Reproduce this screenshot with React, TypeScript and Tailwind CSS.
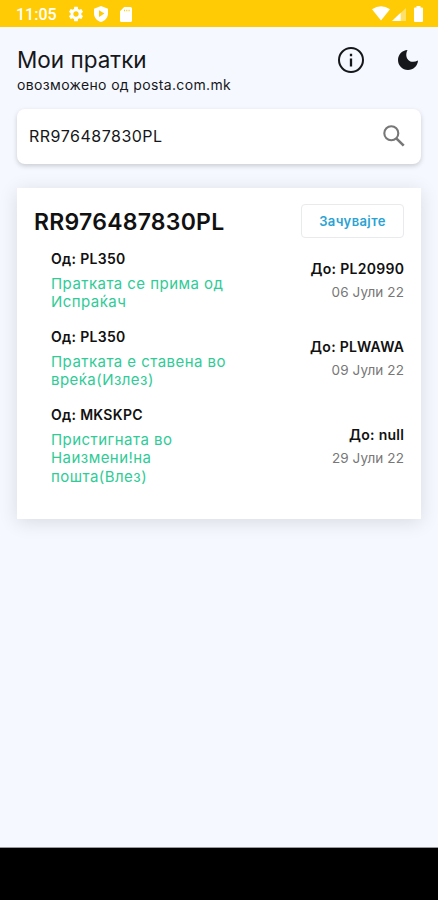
import { MdSettings } from "react-icons/md";

type Step = { from: string; to: string; date: string; lines: string[] };

const steps: Step[] = [
  { from: "PL350", to: "PL20990", date: "06 Јули 22", lines: ["Пратката се прима од", "Испраќач"] },
  { from: "PL350", to: "PLWAWA", date: "09 Јули 22", lines: ["Пратката е ставена во", "вреќа(Излез)"] },
  { from: "MKSKPC", to: "null", date: "29 Јули 22", lines: ["Пристигната во", "Наизмени!на", "пошта(Влез)"] },
];

function StatusBar() {
  return (
    <div className="flex h-[27px] shrink-0 items-center bg-[#ffcb05] pr-[15px] pl-4 text-white">
      <span className="mt-0.5 w-[41px] font-[Roboto,sans-serif] text-[16px] leading-5 font-medium whitespace-nowrap">11:05</span>
      <MdSettings className="mt-px ml-[10px] size-[18px]" />
      <svg className="mt-px ml-[9px] h-4 w-[14px]" viewBox="0 0 14 16" fill="currentColor">
        <path fillRule="evenodd" d="M7 0 14 2.7V7.5C14 11.5 11 14.9 7 16 3 14.9 0 11.5 0 7.5V2.7ZM5 4.2V11L10.4 7.6Z" />
      </svg>
      <svg className="mt-px ml-3 h-[15px] w-3" viewBox="0 0 12 15" fill="currentColor">
        <path fillRule="evenodd" d="M4.2 0H10.5Q12 0 12 1.5V13.5Q12 15 10.5 15H1.5Q0 15 0 13.5V4.2ZM4 2.8V4.3H5V2.8ZM6.3 2.8V4.3H7.3V2.8ZM8.6 2.8V4.3H9.6V2.8Z" />
      </svg>
      <svg className="ml-auto h-[15px] w-[18px]" viewBox="0 0 18 15" fill="currentColor">
        <path d="M0 3.2Q9-2.6 18 3.2L9 14.5Z" />
      </svg>
      <svg className="mt-0.5 ml-[2px] h-[13px] w-[14px]" viewBox="0 0 14 13" fill="currentColor">
        <path d="M14 0V13H0Z" opacity=".4" />
        <path d="M8.7 4.8V13H0Z" />
      </svg>
      <svg className="ml-2 h-4 w-[9px]" viewBox="0 0 9 16" fill="currentColor">
        <path d="M2.5 0H6.5V1.6H8Q9 1.6 9 2.6V15Q9 16 8 16H1Q0 16 0 15V2.6Q0 1.6 1 1.6H2.5Z" />
      </svg>
    </div>
  );
}

function StepRow({ step }: { step: Step }) {
  return (
    <li className="flex items-center justify-between">
      <div>
        <p className="text-[14px] leading-[18px] font-semibold tracking-[0.3px] text-[#111]">Од: {step.from}</p>
        <p className="mt-[6.5px] -mb-[0.5px] text-[15px] leading-[18.8px] tracking-[0.45px] text-[#30cb96]">
          {step.lines.map((line) => (
            <span key={line} className="block whitespace-nowrap">{line}</span>
          ))}
        </p>
      </div>
      <div className="text-right">
        <p className="-mr-[0.3px] text-[14px] leading-[18px] font-semibold tracking-[0.3px] text-[#111]">До: {step.to}</p>
        <p className="mt-[5px] text-[13.5px] leading-[18px] tracking-[0.1px] text-[#777]">{step.date}</p>
      </div>
    </li>
  );
}

export default function App() {
  return (
    <div className="flex h-[900px] w-full flex-col bg-[#f5f8ff] font-[Inter,sans-serif] text-[#15171a]">
      <StatusBar />
      <main className="flex-1 px-[17px]">
        <header className="flex h-[82px] justify-between pt-[18px]">
          <div>
            <h1 className="text-[22.5px] leading-[30px] font-normal whitespace-nowrap">Мои пратки</h1>
            <p className="text-[14px] leading-[20px] tracking-[0.35px] whitespace-nowrap">овозможено од posta.com.mk</p>
          </div>
          <div className="mr-[3px] flex h-[30px] items-center gap-[34px]">
            <svg className="size-[26px]" viewBox="0 0 26 26" fill="none">
              <circle cx="13" cy="13" r="12" stroke="currentColor" strokeWidth="2" />
              <path d="M13 11.5V19.5M13 6.8V9.2" stroke="currentColor" strokeWidth="2.3" />
            </svg>
            <svg className="size-[20px]" viewBox="0 0 20 20" fill="currentColor">
              <path d="M9.5 0C7.4 4.2 8.3 8 10.3 9.9 12.4 12.1 16.2 12.4 20 10.5 19.7 16 15.3 20 10 20 4.3 20 0 15.6 0 10 0 4.6 4.2.2 9.5 0Z" />
            </svg>
          </div>
        </header>
        <div className="flex h-[55px] items-center justify-between rounded-lg bg-white pr-4 pl-3 shadow-[0_2px_5px_rgba(0,0,0,0.18)]">
          <span className="-mt-0.5 text-[16px] tracking-[0.5px]">RR976487830PL</span>
          <svg className="-mt-0.5 size-[22px] text-[#777]" viewBox="0 0 22 22" fill="none" stroke="currentColor">
            <circle cx="8.3" cy="8.3" r="7" strokeWidth="2.1" />
            <path d="M13.3 13.3 20.7 20.7" strokeWidth="2.6" />
          </svg>
        </div>
        <section className="mt-6 h-[331px] bg-white px-[17px] pt-4 shadow-[0_3px_18px_rgba(0,0,0,0.12)]">
          <div className="flex h-[34px] items-center justify-between">
            <h2 className="mt-0.5 text-[23px] leading-[30px] font-semibold tracking-[0.25px] text-[#111]">RR976487830PL</h2>
            <button className="h-[34px] w-[103px] rounded border border-[#e8eaec] pt-0.5 text-[13px] font-semibold tracking-[0.4px] text-[#2ba2d4]">Зачувајте</button>
          </div>
          <ul className="mt-3 flex flex-col gap-[16.5px] pl-[17px]">
            {steps.map((step) => (
              <StepRow key={step.date} step={step} />
            ))}
          </ul>
        </section>
      </main>
      <div className="h-[53px] shrink-0 border-t border-[#999] bg-black" />
    </div>
  );
}
